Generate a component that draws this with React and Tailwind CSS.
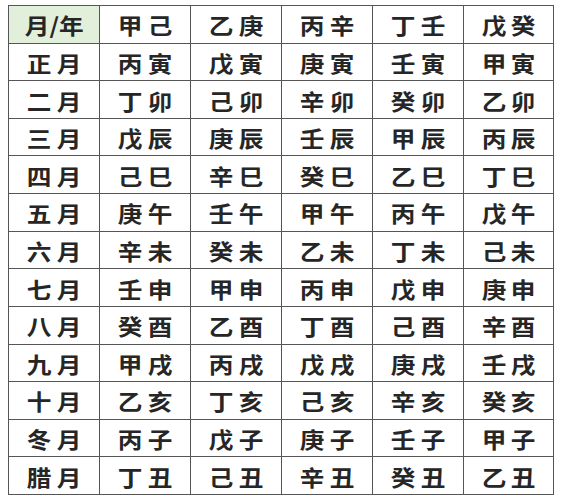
import React from 'react';

const header = ['甲己', '乙庚', '丙辛', '丁壬', '戊癸'];

const rows = [
  ['正月', '丙寅', '戊寅', '庚寅', '壬寅', '甲寅'],
  ['二月', '丁卯', '己卯', '辛卯', '癸卯', '乙卯'],
  ['三月', '戊辰', '庚辰', '壬辰', '甲辰', '丙辰'],
  ['四月', '己巳', '辛巳', '癸巳', '乙巳', '丁巳'],
  ['五月', '庚午', '壬午', '甲午', '丙午', '戊午'],
  ['六月', '辛未', '癸未', '乙未', '丁未', '己未'],
  ['七月', '壬申', '甲申', '丙申', '戊申', '庚申'],
  ['八月', '癸酉', '乙酉', '丁酉', '己酉', '辛酉'],
  ['九月', '甲戌', '丙戌', '戊戌', '庚戌', '壬戌'],
  ['十月', '乙亥', '丁亥', '己亥', '辛亥', '癸亥'],
  ['冬月', '丙子', '戊子', '庚子', '壬子', '甲子'],
  ['腊月', '丁丑', '己丑', '辛丑', '癸丑', '乙丑'],
];

// two characters, spaced apart like the printed table
const Pair = ({ text }) => (
  <div className="h-full bg-white flex items-center justify-center gap-[7px]">
    {text.split('').map((ch, i) => (
      <span key={i} className="inline-block scale-x-[1.12]">{ch}</span>
    ))}
  </div>
);

export default function App() {
  return (
    <div className="w-[563px] h-[500px] bg-white pt-[5px] pl-[8px]" style={{ fontFamily: '"Noto Sans CJK SC", "Noto Sans CJK TC", sans-serif' }}>
      <div className="w-[546px] h-[490px] bg-[#555555] p-px grid gap-px grid-cols-[90px_90px_90px_90px_90px_89px] grid-rows-[repeat(13,minmax(0,1fr))] text-[22px] font-bold text-[#262626] leading-none">
        <div className="h-full bg-[#e2efda] flex items-center justify-center">
          <span className="inline-block scale-x-[1.12]">月/年</span>
        </div>
        {header.map((h) => (
          <Pair key={h} text={h} />
        ))}
        {rows.map((r) =>
          r.map((cell, j) => <Pair key={r[0] + j} text={cell} />)
        )}
      </div>
    </div>
  );
}
